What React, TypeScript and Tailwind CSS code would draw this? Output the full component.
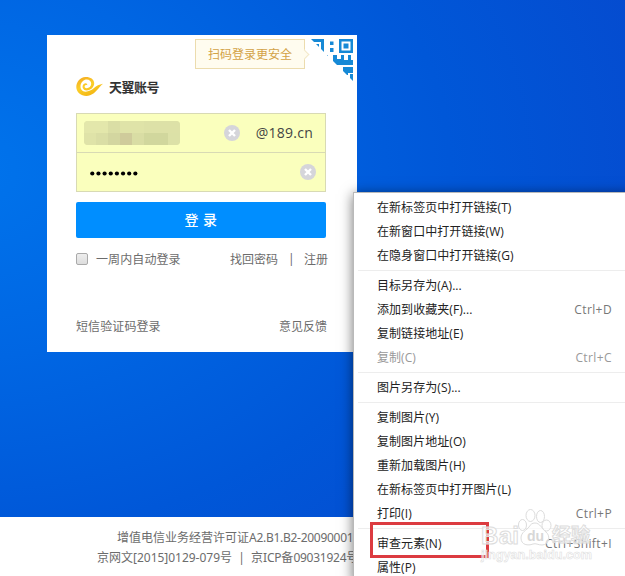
import React from "react";

const cjk = "font-['Noto_Sans','Noto_Sans_CJK_SC',sans-serif]";

type Item = { label: string; keys?: string; disabled?: boolean };

const groups: Item[][] = [
  [{ label: "在新标签页中打开链接(T)" }, { label: "在新窗口中打开链接(W)" }, { label: "在隐身窗口中打开链接(G)" }],
  [
    { label: "目标另存为(A)..." },
    { label: "添加到收藏夹(F)...", keys: "Ctrl+D" },
    { label: "复制链接地址(E)" },
    { label: "复制(C)", keys: "Ctrl+C", disabled: true },
  ],
  [{ label: "图片另存为(S)..." }],
  [
    { label: "复制图片(Y)" },
    { label: "复制图片地址(O)" },
    { label: "重新加载图片(H)" },
    { label: "在新标签页中打开图片(L)" },
    { label: "打印(I)", keys: "Ctrl+P" },
  ],
  [{ label: "审查元素(N)", keys: "Ctrl+Shift+I" }, { label: "属性(P)" }],
];

function Clear() {
  return (
    <svg width="16" height="16" viewBox="0 0 16 16" className="shrink-0">
      <circle cx="8" cy="8" r="8" fill="#d5d5da" />
      <path d="M5 5l6 6M11 5l-6 6" stroke="#fff" strokeWidth="2.4" />
    </svg>
  );
}

function Logo() {
  return (
    <svg width="28" height="22" viewBox="0 0 28 22">
      <defs>
        <linearGradient id="gold" x1="0" y1="0" x2="0.6" y2="1">
          <stop offset="0" stopColor="#f4a51e" />
          <stop offset="0.5" stopColor="#fbcf2a" />
          <stop offset="1" stopColor="#f3b410" />
        </linearGradient>
      </defs>
      <path
        d="M9.500 1C4 1.200 .3 6 .3 11.200C.5 17.500 7.500 21.500 14 19.300C20 17.300 22 12 27 7.800C23 8.500 20.500 10 18 12C14.500 15.300 8 17.500 5.300 13.500C3.500 10 5 5.500 8.500 4C12 2.700 15.200 4.500 15.200 7.800C15.200 10.500 13 12.200 10.800 12.200C9 12.200 8.300 11 8.800 9.800C9.300 8.700 10.500 8.800 11.300 9.300C11.600 7.500 9.500 6.600 7.800 8C5.500 10 6.500 14.300 10.500 14.400C15 14.400 18.300 11 18.200 7C18 3 14 .8 9.500 1Z"
        fill="url(#gold)"
      />
    </svg>
  );
}

function QrCorner() {
  return (
    <svg width="42" height="42" viewBox="0 0 42 42" className="absolute right-[4px] top-[4px]">
      <clipPath id="fold">
        <path d="M0 0H42V42Z" />
      </clipPath>
      <g clipPath="url(#fold)" fill="#1689d6">
        <path d="M0 0H13V14H10V3H0ZM5 5H8V9H5ZM19 2.500H22.500V6H19ZM19 9H22.500V13H19ZM28 0H42V14H28ZM30.500 2.500V11.500H39.500V2.500ZM32.500 4.500H37.500V9.500H32.500Z" fillRule="evenodd" />
        <path d="M14 16H17V19H14ZM22 16H26V20H30V16H33V21H37V16H40V21H42V26H22ZM32 28H42V34H37V36H32ZM39 35H42V42H39Z" />
      </g>
    </svg>
  );
}

function Mosaic() {
  return (
    <div className="flex h-[24px] w-[96px] flex-col overflow-hidden rounded-[4px] bg-[#e3e7a9]">
      <div className="flex h-3">
        <i className="w-6 bg-[#e3e7ab]" /><i className="w-3 bg-[#dadea5]" /><i className="w-6 bg-[#dfe3a8]" /><i className="flex-1 bg-[#dde1a7]" />
      </div>
      <div className="flex h-3">
        <i className="w-3 bg-[#dfe3a8]" /><i className="w-3 bg-[#dadea5]" /><i className="w-3 bg-[#d3d6a0]" /><i className="w-3 bg-[#cfcb9b]" /><i className="w-3 bg-[#d9dda4]" /><i className="w-6 bg-[#d1d79d]" /><i className="flex-1 bg-[#dce1a7]" />
      </div>
    </div>
  );
}

function Watermark() {
  return (
    <svg width="155" height="66" viewBox="0 0 155 66" className="absolute left-[470px] top-[505px]">
      <g fill="#fff" fillOpacity="0.65" stroke="#dcdcdc" strokeWidth="1">
        <ellipse cx="52.500" cy="20" rx="4" ry="5.500" />
        <ellipse cx="60.500" cy="10.500" rx="4.500" ry="6" />
        <ellipse cx="70.500" cy="11.500" rx="4" ry="6" />
        <ellipse cx="76.500" cy="20.500" rx="4.500" ry="5.500" />
        <path d="M65 18C70 18 72 24 76 27C81 31 79 40 72 40C68 40 66 38 63 39C58 41 51 40 51 33C51 27 57 25 59 22C60.500 19.500 62 18 65 18Z" />
        <g className="font-['Liberation_Sans','Noto_Sans_CJK_SC',sans-serif] font-bold">
          <text x="11" y="39" fontSize="24" textLength="38">Bai</text>
          <text x="82" y="37" fontSize="19" textLength="38">经验</text>
          <text x="11" y="54" fontSize="12" textLength="111" lengthAdjust="spacingAndGlyphs" strokeWidth="0.500">jingyan.baidu.com</text>
        </g>
      </g>
      <text x="57" y="36" fontSize="14" fill="#d7d7d7" className="font-['Liberation_Sans',sans-serif] font-bold">du</text>
    </svg>
  );
}

export default function App() {
  return (
    <div className={`relative flex h-[576px] w-[625px] flex-col overflow-hidden bg-white ${cjk}`}>
      <main className="h-[517px] shrink-0 bg-[radial-gradient(ellipse_720px_540px_at_-40px_170px,#0074ec_0%,#0066e3_35%,#0057d8_68%,#054bcf_100%)] pl-[47px] pt-[35px]">
        <section className="relative h-[317px] w-[310px] bg-white px-[29px] text-[12px] text-[#6c6c6c]">
          <div className="absolute left-[148px] top-[4px] flex h-[30px] w-[110px] items-center justify-center border border-[#ecdcae] bg-[#fffcef] pt-[2px] text-[#d3a246]">
            <span className="whitespace-nowrap">扫码登录更安全</span>
            <span className="absolute -right-[4px] top-[11px] size-[7px] rotate-45 border-r border-t border-[#f3e9ca] bg-[#fffcef]" />
          </div>
          <QrCorner />
          <header className="flex h-[78px] items-end gap-[5px] pb-[15px]">
            <Logo />
            <span className="mb-px text-[13px] font-bold leading-[20px] tracking-[-0.5px] text-[#333]">天翼账号</span>
          </header>
          <div className="h-[79px] w-[250px] border border-[#d8dab4] bg-[#faffbd]">
            <div className="flex h-[39px] items-center border-b border-[#d8dab4] pl-[7px] pr-[12px]">
              <Mosaic />
              <div className="ml-[44px] mr-auto flex"><Clear /></div>
              <span className="mb-[2px] font-['Open_Sans',sans-serif] text-[14px] tracking-[0.25px] text-[#444]">@189.cn</span>
            </div>
            <div className="flex h-[38px] items-center justify-between pl-[13px] pr-[9px]">
              <svg width="48" height="5" viewBox="0 0 48 5" className="mt-[2px]">
                {Array.from({ length: 8 }, (_, i) => <circle key={i} cx={2.3 + i * 6.15} cy="2.5" r="2.1" />)}
              </svg>
              <Clear />
            </div>
          </div>
          <button className="mt-[10px] flex h-[36px] w-[250px] items-center justify-center rounded-[2px] bg-[#008eff] pb-px text-[14px] font-medium text-white">
            <span className="whitespace-pre tracking-[0.5px]">登 录</span>
          </button>
          <div className="mt-[12px] flex h-[18px] w-[252px] items-center">
            <span className="size-[12px] rounded-[2px] border border-[#aaa] bg-gradient-to-b from-[#eee] to-[#ddd]" />
            <span className="ml-[8px] pt-[2px] tracking-[0.1px]">一周内自动登录</span>
            <span className="ml-auto pt-[2px]">找回密码</span>
            <span className="ml-[10px] mr-[12px] w-[4px]">|</span>
            <span className="pt-[2px]">注册</span>
          </div>
          <footer className="mt-[50px] flex h-[18px] w-[251px] items-center justify-between">
            <span className="tracking-[0.1px]">短信验证码登录</span>
            <span>意见反馈</span>
          </footer>
        </section>
      </main>
      <footer className="flex flex-col whitespace-nowrap pt-[11px] text-[12px] leading-[20px] text-[#6c6c6c]">
        <span className="pl-[117px]">增值电信业务经营许可证<span className="tracking-[-0.28px]">A2.B1.B2-20090001</span></span>
        <span className="flex pl-[97px]">
          <span>京网文<span className="tracking-[-0.02px]">[2015]0129-079</span>号</span>
          <span className="w-[19px] text-center">|</span>
          <span>京<span className="tracking-[-0.2px]">ICP</span>备<span className="tracking-[-0.25px]">09031924</span>号</span>
        </span>
      </footer>
      <nav className="absolute left-[353px] top-[192px] h-[390px] w-[280px] border border-[#b9b9b9] bg-white pt-[3px] font-['Open_Sans','Noto_Sans_CJK_SC',sans-serif] text-[12px] text-[#222] shadow-[0_2px_12px_rgba(0,0,0,0.55)]">
        {groups.map((group, g) => (
          <div key={g}>
            {g > 0 && <div className="ml-[4px] h-[6px] pt-[2px]"><div className="h-px bg-[#ededed]" /></div>}
            {group.map((item) => (
              <div key={item.label} className={`flex h-[24px] items-center justify-between pl-[23px] pr-[20px] ${item.disabled ? "text-[#999]" : ""}`}>
                <span className="tracking-[0.06px]">{item.label}</span>
                {item.keys && <span className={`tracking-[0.4px] ${item.disabled ? "text-[#999]" : "text-[#777]"}`}>{item.keys}</span>}
              </div>
            ))}
          </div>
        ))}
      </nav>
      <div className="absolute left-[370px] top-[522px] h-[36px] w-[119px] border-[3px] border-[#dc3b40]" />
      <Watermark />
    </div>
  );
}
